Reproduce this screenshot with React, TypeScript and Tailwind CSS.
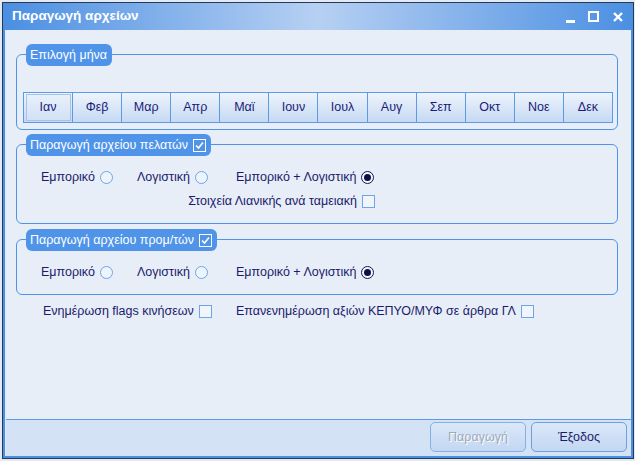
import React from "react";

const months = ["Ιαν", "Φεβ", "Μαρ", "Απρ", "Μαϊ", "Ιουν", "Ιουλ", "Αυγ", "Σεπ", "Οκτ", "Νοε", "Δεκ"];

function Radio({ checked }: { checked?: boolean }) {
  if (checked) {
    return (
      <span className="w-[13px] h-[13px] rounded-full border border-[#14144a] bg-[#f4f8fd] flex items-center justify-center shrink-0">
        <span className="w-[7px] h-[7px] rounded-full bg-[#0e0e48]" />
      </span>
    );
  }
  return <span className="w-[13px] h-[13px] rounded-full border border-[#6ea5e8] bg-[#eef4fc] shrink-0" />;
}

function Check() {
  return <span className="w-[13px] h-[13px] border border-[#6ea5e8] bg-[#f0f5fc] shrink-0" />;
}

function PillCheck() {
  return (
    <span className="w-[13px] h-[13px] border border-white ml-[5px] flex items-center justify-center shrink-0">
      <svg width="9" height="9" viewBox="0 0 9 9">
        <path d="M1 4.5 L3.5 7 L8 1.5" stroke="white" strokeWidth="1.6" fill="none" />
      </svg>
    </span>
  );
}

function Pill({ children }: { children: React.ReactNode }) {
  return (
    <div className="relative z-10 ml-[10px] self-start h-[22px] rounded-[6px] bg-[#4f94e8] pl-[4px] pr-[5px] flex items-center text-white text-[12.5px] leading-none">
      {children}
    </div>
  );
}

function RadioRow() {
  return (
    <div className="flex items-center h-[16px] pl-[24px] text-[12.5px] text-[#1b1b6b]">
      <div className="w-[96px] flex items-center gap-[5px]">
        <span>Εμπορικό</span>
        <Radio />
      </div>
      <div className="w-[99px] flex items-center gap-[5px]">
        <span>Λογιστική</span>
        <Radio />
      </div>
      <div className="flex items-center gap-[5px]">
        <span>Εμπορικό + Λογιστική</span>
        <Radio checked />
      </div>
    </div>
  );
}

export default function App() {
  return (
    <div className="w-[635px] h-[461px] bg-[#e2eaf5] pt-[2px] pl-[2px] font-['Liberation_Sans',Arial,sans-serif] overflow-hidden">
      <div className="w-[632px] h-[457px] border border-[#2b3852] bg-[#4a8fe2] flex flex-col">
        {/* Title bar */}
        <div className="h-[27px] shrink-0 flex items-center pl-[9px] pr-[10px] bg-gradient-to-r from-[#4a8fe2] via-[#b6d0f2] to-[#4a8fe2]">
          <span className="text-white font-bold text-[13.5px] flex-1">Παραγωγή αρχείων</span>
          <div className="flex items-center h-full">
            <span className="w-[9px] h-[3px] bg-white mt-[10px]" />
            <span className="w-[11px] h-[11px] border-2 border-white ml-[13px]" />
            <svg width="10" height="10" viewBox="0 0 10 10" className="ml-[14px]">
              <path d="M1 1 L9 9 M9 1 L1 9" stroke="white" strokeWidth="2.4" />
            </svg>
          </div>
        </div>
        {/* Body */}
        <div className="flex-1 mx-[2px] mb-[2px] bg-[#e7eef8] border-l border-[#dceafa] flex flex-col">
          <div className="flex-1 pt-[14px] pl-[10px] flex flex-col">
            <div className="w-[602px] flex flex-col">
              {/* Group 1 */}
              <div className="flex flex-col">
                <Pill>Επιλογή μήνα</Pill>
                <div className="-mt-[12px] h-[76px] border border-[#4f94e8] rounded-[6px] pt-[37px] pl-[6px]">
                  <div className="w-[590px] h-[31px] flex border border-[#5b9be6]">
                    {months.map((m, i) => (
                      <div
                        key={m}
                        className={
                          "flex-1 flex items-center justify-center text-[12.5px] text-[#1b1b78] bg-gradient-to-b from-[#eef4fc] to-[#c6d9f3] " +
                          (i < 11 ? "border-r border-[#5b9be6] " : "")
                        }
                      >
                        {i === 0 ? (
                          <div className="w-[45px] h-[27px] border border-[#a9c3e6] bg-gradient-to-b from-[#e8f0fb] to-[#d2e1f5] flex items-center justify-center">
                            {m}
                          </div>
                        ) : (
                          m
                        )}
                      </div>
                    ))}
                  </div>
                </div>
              </div>

              {/* Group 2 */}
              <div className="flex flex-col mt-[4px]">
                <Pill>
                  Παραγωγή αρχείου πελατών
                  <PillCheck />
                </Pill>
                <div className="-mt-[12px] h-[80px] border border-[#4f94e8] rounded-[6px] pt-[24px]">
                  <RadioRow />
                  <div className="mt-[8px] h-[16px] pl-[24px] flex">
                    <div className="w-[334px] flex items-center justify-end gap-[5px] text-[12.5px] text-[#1b1b6b]">
                      <span>Στοιχεία Λιανικής ανά ταμειακή</span>
                      <Check />
                    </div>
                  </div>
                </div>
              </div>

              {/* Group 3 */}
              <div className="flex flex-col mt-[5px]">
                <Pill>
                  Παραγωγή αρχείου προμ/τών
                  <PillCheck />
                </Pill>
                <div className="-mt-[12px] h-[56px] border border-[#4f94e8] rounded-[6px] pt-[24px]">
                  <RadioRow />
                </div>
              </div>

              {/* Bottom row */}
              <div className="mt-[8px] h-[16px] pl-[27px] flex items-center text-[12.5px] text-[#1b1b6b]">
                <div className="w-[193px] flex items-center gap-[5px]">
                  <span>Ενημέρωση flags κινήσεων</span>
                  <Check />
                </div>
                <div className="flex items-center gap-[5px]">
                  <span>Επανενημέρωση αξιών ΚΕΠΥΟ/ΜΥΦ σε άρθρα ΓΛ</span>
                  <Check />
                </div>
              </div>
            </div>
          </div>
          {/* Footer */}
          <div className="h-[37px] shrink-0 border-t border-[#5b9be6] bg-[#d3e2f4] pt-[2px] pr-[4px] flex justify-end gap-[5px]">
            <div className="w-[96px] h-[30px] rounded-[5px] border border-[#86b0e4] bg-gradient-to-b from-[#dbe8f8] to-[#c2d7f2] flex items-center justify-center text-[12.5px] text-[#a0a9b8] [text-shadow:1px_1px_0_#ffffff]">
              Παραγωγή
            </div>
            <div className="w-[96px] h-[30px] rounded-[5px] border border-[#6f9fdc] bg-gradient-to-b from-[#dbe8f8] to-[#c2d7f2] flex items-center justify-center text-[12.5px] text-[#1b1b6b]">
              Έξοδος
            </div>
          </div>
        </div>
      </div>
    </div>
  );
}
